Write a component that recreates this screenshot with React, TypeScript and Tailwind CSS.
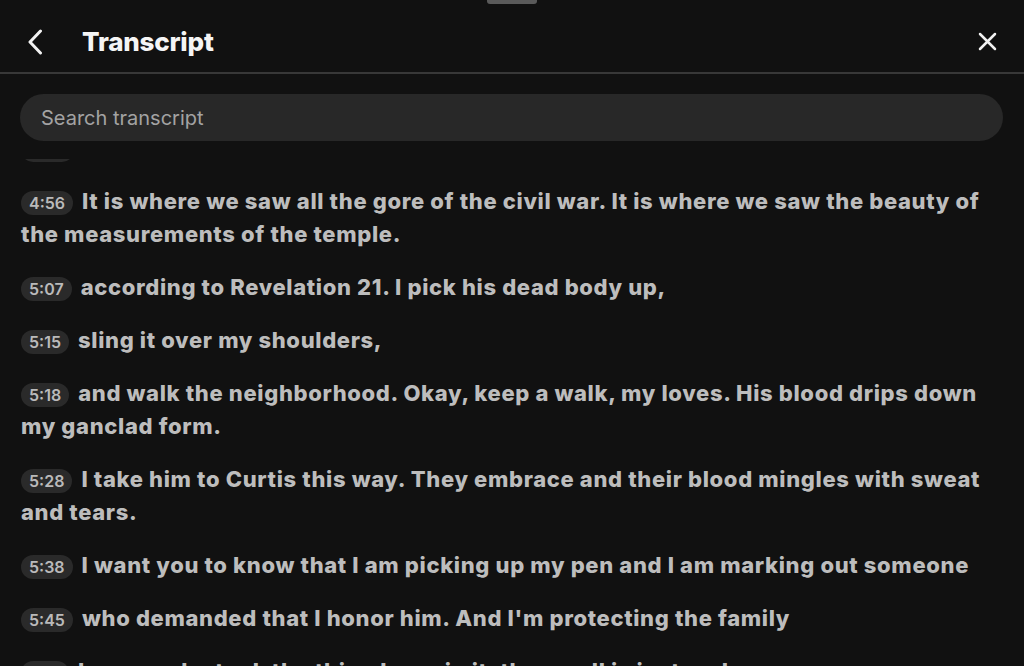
import React from "react";

const entries: { t: string; text: string }[] = [
  { t: "4:49", text: "and then there it was." },
  { t: "4:56", text: "It is where we saw all the gore of the civil war. It is where we saw the beauty of the measurements of the temple." },
  { t: "5:07", text: "according to Revelation 21. I pick his dead body up," },
  { t: "5:15", text: "sling it over my shoulders," },
  { t: "5:18", text: "and walk the neighborhood. Okay, keep a walk, my loves. His blood drips down my ganclad form." },
  { t: "5:28", text: "I take him to Curtis this way. They embrace and their blood mingles with sweat and tears." },
  { t: "5:38", text: "I want you to know that I am picking up my pen and I am marking out someone" },
  { t: "5:45", text: "who demanded that I honor him. And I'm protecting the family" },
  { t: "5:51", text: "because he took the thing I saw in it, the smell is just and" },
];

export default function App() {
  return (
    <div
      className="h-[666px] w-[1024px] overflow-hidden bg-[#111111] flex flex-col"
      style={{ fontFamily: "Inter, 'Noto Sans', sans-serif" }}
    >
      <div className="flex justify-center">
        <div className="h-[4px] w-[50px] rounded-b-[3px] bg-[#5a5a5a]" />
      </div>
      <div className="h-[70px] flex items-center border-b-2 border-[#383838] pt-[7px] pl-[27px] pr-[27px]">
        <svg width="16" height="26" viewBox="0 0 16 26" fill="none">
          <path d="M13.5 2 L3 13 L13.5 24" stroke="#f2f2f2" strokeWidth="3" strokeLinecap="round" strokeLinejoin="round" />
        </svg>
        <div className="ml-[39px] text-[26px] font-extrabold text-[#f5f5f5] tracking-[-0.2px]">Transcript</div>
        <div className="flex-1" />
        <svg width="19" height="19" viewBox="0 0 19 19" fill="none">
          <path d="M2 2 L17 17 M17 2 L2 17" stroke="#f2f2f2" strokeWidth="2.5" strokeLinecap="round" />
        </svg>
      </div>
      <div className="px-[20px] pr-[21px] mt-[20px]">
        <div className="h-[47px] rounded-full bg-[#282828] flex items-center pl-[21px] text-[20px] text-[#a3a3a3]">
          Search transcript
        </div>
      </div>
      <div className="flex-1 overflow-hidden mt-[18px] px-[21px] pr-[21px]">
        <div className="-mt-[27px] flex flex-col gap-[20px]">
          {entries.map((e) => (
            <p key={e.t} className="text-[22px] font-extrabold leading-[33px] tracking-[0.65px] text-[#bdbdbd]">
              <span className="inline-block rounded-full bg-[#2a2a2a] px-[8px] mr-[9px] text-[16px] leading-[24px] font-semibold tracking-normal text-[#bababa]">
                {e.t}
              </span>
              {e.text}
            </p>
          ))}
        </div>
      </div>
    </div>
  );
}
